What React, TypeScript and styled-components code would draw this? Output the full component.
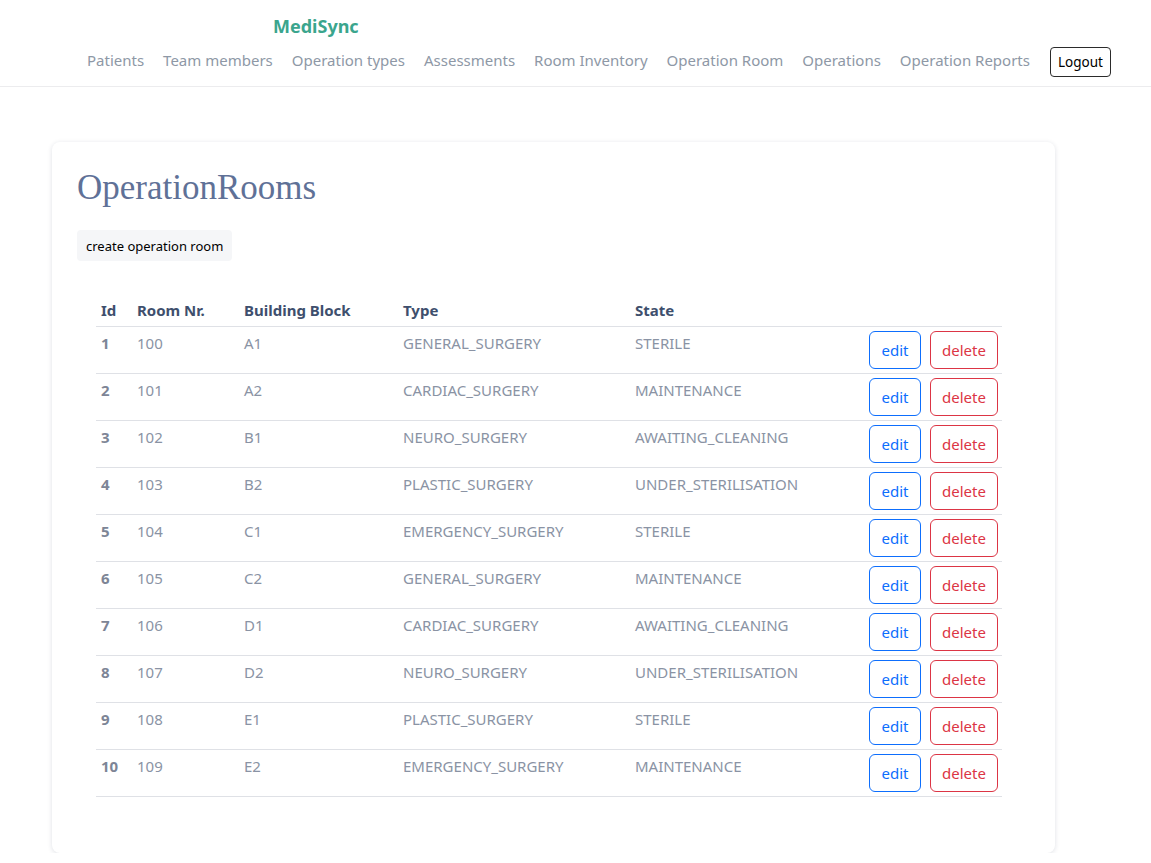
import React from "react";
import styled, { createGlobalStyle } from "styled-components";

const GlobalStyle = createGlobalStyle`
  html, body { margin: 0; padding: 0; background: #ffffff; }
  body { font-family: "Noto Sans", "Open Sans", sans-serif; }
  * { box-sizing: border-box; }
`;

const Header = styled.header`
  height: 87px;
  border-bottom: 1px solid #ececee;
  display: flex;
  flex-direction: column;
`;

const Brand = styled.div`
  margin: 14px 0 0 273px;
  font-size: 18px;
  font-weight: 700;
  color: #3ba58d;
  line-height: 24px;
`;

const Nav = styled.nav`
  display: flex;
  align-items: center;
  gap: 19px;
  margin: 5px 0 0 87px;
`;

const NavLink = styled.a`
  font-size: 15px;
  color: #8e98a6;
  text-decoration: none;
  line-height: 24px;
`;

const LogoutButton = styled.button`
  font-family: inherit;
  margin-left: 1px;
  margin-top: 4px;
  height: 30px;
  width: 61px;
  padding: 0;
  font-size: 13.5px;
  color: #000;
  background: #fff;
  border: 1px solid #2b2b2b;
  border-radius: 4px;
`;

const Main = styled.main`
  padding: 55px 0 0 52px;
`;

const Card = styled.section`
  width: 1003px;
  background: #fff;
  border-radius: 8px;
  box-shadow: 0 1px 5px rgba(30, 40, 80, 0.14);
  padding: 24px 25px 56px 25px;
`;

const Title = styled.h1`
  margin: 0;
  font-family: "Liberation Serif", "Times New Roman", serif;
  font-weight: 400;
  font-size: 35px;
  line-height: 44px;
  color: #5f7197;
`;

const CreateButton = styled.button`
  font-family: inherit;
  margin-top: 20px;
  height: 31px;
  padding: 0 9px;
  font-size: 13px;
  color: #000;
  background: #f5f6f8;
  border: none;
  border-radius: 4px;
`;

const Table = styled.table`
  margin: 33px 0 0 19px;
  width: 906px;
  border-collapse: collapse;
  table-layout: fixed;
`;

const HeadCell = styled.th<{ $w?: number }>`
  width: ${(p) => (p.$w ? `${p.$w}px` : "auto")};
  text-align: left;
  font-size: 15px;
  font-weight: 700;
  color: #3e4f6d;
  padding: 4px 5px;
  line-height: 24px;
  border-bottom: 1px solid #dfe1e6;
`;

const Row = styled.tr`
  border-bottom: 1px solid #dfe1e6;
`;

const Cell = styled.td<{ $bold?: boolean }>`
  vertical-align: top;
  font-size: 15px;
  line-height: 24px;
  padding: 4px 5px;
  height: 46px;
  color: ${(p) => (p.$bold ? "#7d8596" : "#8a93a4")};
  font-weight: ${(p) => (p.$bold ? 700 : 400)};
`;

const ActionCell = styled.td`
  vertical-align: top;
  padding: 4px 4px 4px 5px;
  text-align: right;
`;

const Actions = styled.div`
  display: flex;
  justify-content: flex-end;
  gap: 9px;
`;

const OutlineButton = styled.button<{ $tone: "blue" | "red" }>`
  font-family: inherit;
  height: 38px;
  width: ${(p) => (p.$tone === "blue" ? "52px" : "68px")};
  padding: 0;
  font-size: 15px;
  background: #fff;
  border-radius: 6px;
  color: ${(p) => (p.$tone === "blue" ? "#0d6efd" : "#dc3545")};
  border: 1px solid ${(p) => (p.$tone === "blue" ? "#0d6efd" : "#dc3545")};
`;

const rooms = [
  [1, 100, "A1", "GENERAL_SURGERY", "STERILE"],
  [2, 101, "A2", "CARDIAC_SURGERY", "MAINTENANCE"],
  [3, 102, "B1", "NEURO_SURGERY", "AWAITING_CLEANING"],
  [4, 103, "B2", "PLASTIC_SURGERY", "UNDER_STERILISATION"],
  [5, 104, "C1", "EMERGENCY_SURGERY", "STERILE"],
  [6, 105, "C2", "GENERAL_SURGERY", "MAINTENANCE"],
  [7, 106, "D1", "CARDIAC_SURGERY", "AWAITING_CLEANING"],
  [8, 107, "D2", "NEURO_SURGERY", "UNDER_STERILISATION"],
  [9, 108, "E1", "PLASTIC_SURGERY", "STERILE"],
  [10, 109, "E2", "EMERGENCY_SURGERY", "MAINTENANCE"],
] as const;

const links = [
  "Patients",
  "Team members",
  "Operation types",
  "Assessments",
  "Room Inventory",
  "Operation Room",
  "Operations",
  "Operation Reports",
];

export default function App() {
  return (
    <>
      <GlobalStyle />
      <Header>
        <Brand>MediSync</Brand>
        <Nav>
          {links.map((l) => (
            <NavLink key={l} href="#">
              {l}
            </NavLink>
          ))}
          <LogoutButton>Logout</LogoutButton>
        </Nav>
      </Header>
      <Main>
        <Card>
          <Title>OperationRooms</Title>
          <CreateButton>create operation room</CreateButton>
          <Table>
            <thead>
              <tr>
                <HeadCell $w={36}>Id</HeadCell>
                <HeadCell $w={107}>Room Nr.</HeadCell>
                <HeadCell $w={159}>Building Block</HeadCell>
                <HeadCell $w={232}>Type</HeadCell>
                <HeadCell $w={234}>State</HeadCell>
                <HeadCell></HeadCell>
              </tr>
            </thead>
            <tbody>
              {rooms.map((r) => (
                <Row key={r[0]}>
                  <Cell $bold>{r[0]}</Cell>
                  <Cell>{r[1]}</Cell>
                  <Cell>{r[2]}</Cell>
                  <Cell>{r[3]}</Cell>
                  <Cell>{r[4]}</Cell>
                  <ActionCell>
                    <Actions>
                      <OutlineButton $tone="blue">edit</OutlineButton>
                      <OutlineButton $tone="red">delete</OutlineButton>
                    </Actions>
                  </ActionCell>
                </Row>
              ))}
            </tbody>
          </Table>
        </Card>
      </Main>
    </>
  );
}
